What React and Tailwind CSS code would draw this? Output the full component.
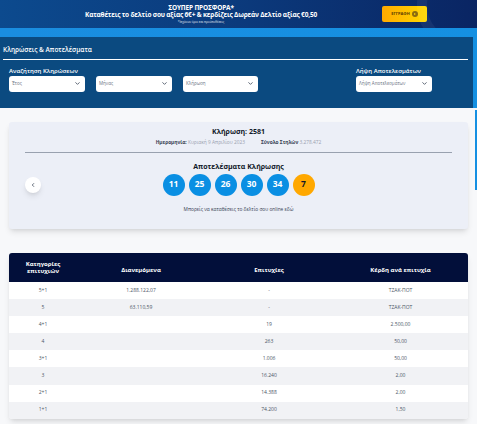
import { ChevronDown, ChevronLeft } from 'lucide-react';

const rows = [
  ['5+1', '1.288.122,07', '-', 'ΤΖΑΚ-ΠΟΤ'],
  ['5', '63.110,59', '-', 'ΤΖΑΚ-ΠΟΤ'],
  ['4+1', '', '19', '2.500,00'],
  ['4', '', '263', '50,00'],
  ['3+1', '', '1.006', '50,00'],
  ['3', '', '16.240', '2,00'],
  ['2+1', '', '14.388', '2,00'],
  ['1+1', '', '74.200', '1,50'],
];

const balls = ['11', '25', '26', '30', '34'];

function Select({ label, className = '' }) {
  return (
    <div className={`h-4 bg-white rounded-[3px] flex items-center justify-between pl-[3px] pr-[4px] ${className}`}>
      <span className="text-[4.5px] text-gray-500">{label}</span>
      <ChevronDown className="w-[7px] h-[7px] text-gray-600" strokeWidth={3} />
    </div>
  );
}

export default function App() {
  return (
    <div className="relative w-[477px] h-[424px] overflow-hidden bg-[#f7f8fa]" style={{ fontFamily: '"Open Sans", "Noto Sans", sans-serif' }}>
      {/* Promo banner */}
      <div className="relative overflow-hidden h-[28px] bg-gradient-to-r from-[#0c4a8e] via-[#0b3a7c] to-[#0a2563] flex items-center">
        <div className="absolute -right-[30px] -top-[40px] w-[90px] h-[90px] rounded-full border-[10px] border-white/5" />
        <div className="flex-1 flex flex-col items-center leading-none text-white pl-[20px]">
          <span className="text-[6.5px] font-bold tracking-tight">ΣΟΥΠΕΡ ΠΡΟΣΦΟΡΑ*</span>
          <span className="text-[6.5px] font-bold mt-[1px] tracking-tight">Καταθέτεις το δελτίο σου αξίας 6€+ &amp; κερδίζεις Δωρεάν Δελτίο αξίας €0,50</span>
          <span className="text-[3px] mt-[2px] opacity-90">*Ισχύουν όροι και προϋποθέσεις</span>
        </div>
        <div className="w-[45px] h-4 mr-[50px] rounded-[2px] bg-gradient-to-r from-[#ffaa00] to-[#ffd800] flex items-center justify-center gap-[2px]">
          <span className="text-[4px] font-bold text-[#5a3a00]">ΕΓΓΡΑΦΗ</span>
          <span className="w-[6px] h-[6px] rounded-full bg-[#8a6a10] flex items-center justify-center">
            <span className="w-0 h-0 border-y-[1.5px] border-y-transparent border-l-[2px] border-l-[#ffd800] ml-[0.5px]" />
          </span>
        </div>
      </div>

      {/* Search panel */}
      <div className="bg-gradient-to-r from-[#1a8de0] to-[#1590e2] pt-[9px] pr-[4px]">
        <div className="h-[71px] bg-[#0b4a80] pt-[10px] px-[3px]">
          <div className="text-[6.5px] font-semibold text-white leading-none">Κληρώσεις &amp; Αποτελέσματα</div>
          <div className="h-px bg-white mt-[5px] mr-[2px]" />
          <div className="flex items-end justify-between px-[6px] mt-[8px] pr-[38px]">
            <div>
              <div className="text-[6px] font-semibold text-white leading-none mb-[2px]">Αναζήτηση Κληρώσεων</div>
              <div className="flex gap-[11px]">
                <Select label="Έτος" className="w-[76px]" />
                <Select label="Μήνας" className="w-[76px]" />
                <Select label="Κλήρωση" className="w-[75px]" />
              </div>
            </div>
            <div>
              <div className="text-[6px] font-semibold text-white leading-none mb-[2px]">Λήψη Αποτελεσμάτων</div>
              <Select label="Λήψη Αποτελεσμάτων" className="w-[76px]" />
            </div>
          </div>
        </div>
      </div>

      {/* scroll indicator on the right edge */}
      <div className="absolute right-0 top-[110px] w-[2px] h-[80px] bg-[#1590e2]" />

      <div className="px-[9px] pt-[14px]">
        {/* Draw card */}
        <div className="h-[107px] bg-[#eceff7] rounded-[3px] shadow-md flex flex-col items-center pt-[6px]">
          <div className="text-[7px] font-bold text-gray-900 leading-none">Κλήρωση: 2581</div>
          <div className="flex gap-[16px] text-[4.8px] leading-none mt-[5px]">
            <span><span className="font-bold text-gray-700">Ημερομηνία:</span> <span className="text-gray-400">Κυριακή 9 Απριλίου 2023</span></span>
            <span><span className="font-bold text-gray-700">Σύνολο Στηλών</span> <span className="text-gray-400">3.278.472</span></span>
          </div>
          <div className="self-stretch h-px bg-gray-400 mx-[16px] mt-[7px]" />
          <div className="text-[7px] font-bold text-gray-900 leading-none mt-[10px]">Αποτελέσματα Κλήρωσης</div>
          <div className="self-stretch flex items-center mt-[4px] px-[16px]">
            <button className="w-4 h-4 rounded-full bg-white shadow-md flex items-center justify-center">
              <ChevronLeft className="w-[6px] h-[6px] text-gray-700" strokeWidth={3} />
            </button>
            <div className="flex-1 flex justify-center gap-[4px] pr-[16px]">
              {balls.map((b) => (
                <div key={b} className="w-[22px] h-[22px] rounded-full bg-[#0a8fe3] text-white text-[8.5px] font-bold flex items-center justify-center">{b}</div>
              ))}
              <div className="w-[22px] h-[22px] rounded-full bg-[#ffa800] text-gray-900 text-[8.5px] font-bold flex items-center justify-center">7</div>
            </div>
          </div>
          <div className="text-[4.8px] text-gray-700 leading-none mt-[11px]">Μπορείς να καταθέσεις το δελτίο σου online εδώ</div>
        </div>

        {/* Results table */}
        <div className="mt-[24px] rounded-[3px] overflow-hidden shadow-md">
          <div className="h-[29px] bg-[#020f3a] grid grid-cols-[68px_128px_128px_1fr] items-center text-white text-[6px] font-bold leading-[7px] text-center">
            <span>Κατηγορίες<br />επιτυχιών</span>
            <span className="pt-[6px]">Διανεμόμενα</span>
            <span className="pt-[6px]">Επιτυχίες</span>
            <span className="pt-[6px]">Κέρδη ανά επιτυχία</span>
          </div>
          {rows.map((r, i) => (
            <div key={i} className={`h-[17.1px] grid grid-cols-[68px_128px_128px_1fr] items-center text-center text-[5px] text-gray-600 ${i % 2 ? 'bg-[#f1f2f5]' : 'bg-white'}`}>
              {r.map((c, j) => <span key={j}>{c}</span>)}
            </div>
          ))}
        </div>
      </div>
    </div>
  );
}
